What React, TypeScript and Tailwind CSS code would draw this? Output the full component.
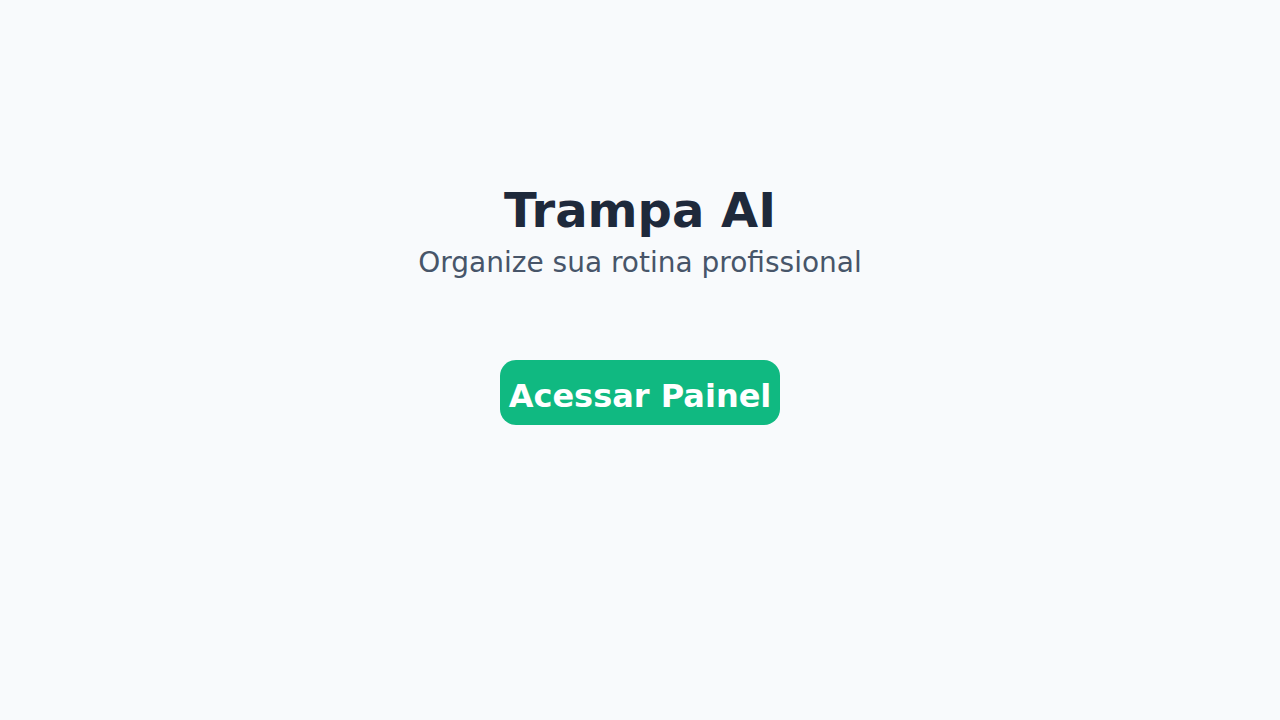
const App = () => {
  return (
    <div className="min-h-screen bg-[#f8fafc] flex flex-col items-center pt-[182px] font-['DejaVu_Sans',sans-serif]">
      <h1 className="text-[48px] leading-[56px] font-bold text-[#1e293b]">Trampa AI</h1>
      <p className="text-[28px] leading-[36px] text-[#475569] mt-[7px]">Organize sua rotina profissional</p>
      <button className="mt-[79px] h-[65px] pt-[6px] px-[9px] rounded-[16px] bg-[#10b981] text-white text-[32px] leading-[40px] font-bold">
        Acessar Painel
      </button>
    </div>
  )
}

export default App
